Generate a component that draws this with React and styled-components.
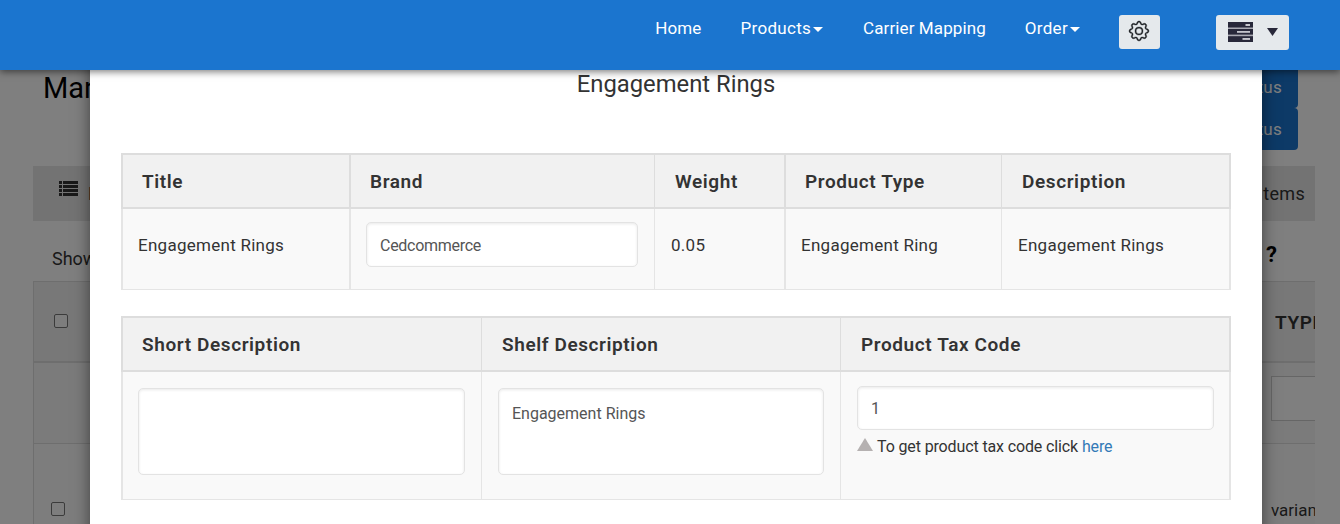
import React from "react";
import styled, { createGlobalStyle } from "styled-components";
import { BsGear } from "react-icons/bs";

const GlobalStyle = createGlobalStyle`
  *, *::before, *::after { box-sizing: border-box; }
  body {
    margin: 0;
    overflow: hidden;
    background: #fff;
    color: #333;
    font: 16px/1.43 Roboto, "Liberation Sans", sans-serif;
  }
`;

const Screen = styled.div`
  position: relative;
  height: 524px;
  overflow: hidden;
`;

/* Navigation bar */
const NavBar = styled.nav`
  position: relative;
  z-index: 3;
  display: flex;
  justify-content: flex-end;
  align-items: flex-start;
  height: 70px;
  padding: 15px 51px 0 0;
  background: #1b75cf;
  box-shadow: 0 2px 7px rgba(0, 0, 0, 0.5);
`;

const NavLink = styled.a`
  display: flex;
  align-items: center;
  height: 26px;
  margin-right: ${(p) => p.$gap}px;
  color: #fff;
  font-size: 17px;
  letter-spacing: ${(p) => p.$tracking || 0.3}px;
  white-space: nowrap;
`;

const Caret = styled.span`
  margin: 2px 0 0 2px;
  border-top: 5px solid #fff;
  border-left: 5px solid transparent;
  border-right: 5px solid transparent;
`;

const NavButton = styled.button`
  display: flex;
  align-items: center;
  justify-content: center;
  gap: 14px;
  width: ${(p) => p.$width}px;
  height: ${(p) => p.$height}px;
  margin: 0 ${(p) => p.$gap || 0}px 0 0;
  padding: 0 ${(p) => p.$end || 0}px 2px 0;
  border: 0;
  border-radius: 3px;
  background: #e5e9ec;
  color: #1f2226;
`;

const GearIcon = styled(BsGear)`
  width: 20px;
  height: 20px;
  stroke: currentColor;
  stroke-width: 0.25;
  overflow: visible;
`;

/* Page behind the dialog */
const Page = styled.main`
  display: flex;
  flex-direction: column;
  height: 454px;
  padding: 0 25px 0 33px;
  overflow: hidden;

  > * {
    flex-shrink: 0;
  }
`;

const PageHead = styled.header`
  display: flex;
  justify-content: space-between;
  height: 96px;
  padding: 0 17px 0 10px;
`;

const PageTitle = styled.h1`
  margin: 0;
  color: #000;
  font-size: 29px;
  font-weight: 400;
  line-height: 36px;
`;

const ActionStack = styled.div`
  display: flex;
  flex-direction: column;
  align-items: flex-end;
  margin-top: -4px;
`;

const ActionButton = styled.button`
  height: 42px;
  padding: 0 16px;
  border: 0;
  border-radius: 4px;
  background: #1b75cf;
  color: #fff;
  font: 17px Roboto, sans-serif;
  letter-spacing: 0.3px;
`;

const SummaryBar = styled.div`
  display: flex;
  justify-content: space-between;
  height: 55px;
  padding: 15px 10px 0 26px;
  background: #e7e7e7;
  font-size: 18px;
  line-height: 25px;
  letter-spacing: 0.3px;
`;

const SummaryLabel = styled.span`
  display: flex;
  gap: 10px;
`;

const ListRow = styled.div`
  display: flex;
  justify-content: space-between;
  height: 60px;
  padding: 24px 38px 0 19px;
  font-size: 18px;
  line-height: 28px;
`;

const Help = styled.strong`
  color: #000;
  font-size: 22px;
  line-height: 20px;
`;

const ProductGrid = styled.div`
  border: solid #ddd;
  border-width: 1px 0 0 1px;
  overflow: hidden;
`;

const ProductRow = styled.div`
  display: flex;
  justify-content: space-between;
  height: ${(p) => p.$height}px;
  padding: ${(p) => p.$pad};
  background: ${(p) => p.$bg};
  border-bottom: ${(p) => p.$line || 1}px solid #ddd;
  white-space: nowrap;
`;

const CheckBox = styled.span`
  width: 14px;
  height: 14px;
  border: 1px solid #777;
  border-radius: 2px;
  background: #fafafa;
`;

const TypeCell = styled.div`
  width: ${(p) => p.$width}px;
  margin-top: ${(p) => p.$shift || 0}px;
  overflow: hidden;
  font-size: ${(p) => p.$size || 17}px;
  font-weight: ${(p) => p.$weight || 400};
  line-height: 24px;
  letter-spacing: ${(p) => p.$tracking || 0}px;
`;

const FilterInput = styled.div`
  width: 80px;
  height: 45px;
  border: 1px solid #ccc;
  background: #fff;
`;

const Backdrop = styled.div`
  position: absolute;
  inset: 0;
  z-index: 1;
  background: rgba(0, 0, 0, 0.5);
`;

/* Product dialog */
const Dialog = styled.section`
  position: absolute;
  top: 30px;
  bottom: -40px;
  left: 90px;
  z-index: 2;
  width: 1172px;
  padding: 35px 31px 0;
  background: #fff;
  box-shadow: 0 5px 15px rgba(0, 0, 0, 0.5);
`;

const DialogTitle = styled.h4`
  height: 88px;
  margin: 0;
  font-size: 23.8px;
  font-weight: 400;
  line-height: 38px;
  text-align: center;
`;

const Table = styled.div`
  display: grid;
  grid-template-columns: ${(p) => p.$columns};
  grid-template-rows: 56px ${(p) => p.$body}px;
  margin-bottom: 26px;
`;

const HeadCell = styled.div`
  padding: 0 0 0 ${(p) => p.$left || 20}px;
  border: solid #ddd;
  border-width: 2px ${(p) => p.$right}px 2px ${(p) => (p.$first ? 2 : 0)}px;
  background: #f1f1f1;
  font-size: 19px;
  font-weight: 600;
  line-height: 54px;
  letter-spacing: 0.6px;
`;

const BodyCell = styled.div`
  padding: ${(p) => p.$top}px ${(p) => p.$end || 16}px 0 ${(p) => (p.$first ? 15 : p.$left || 16)}px;
  border: solid #e5e5e5;
  border-width: 0 ${(p) => p.$right}px 1px ${(p) => (p.$first ? 2 : 0)}px;
  background: #f9f9f9;
  font-size: 17px;
  line-height: 24px;
  letter-spacing: 0.27px;
`;

const Field = styled.div`
  height: ${(p) => p.$height}px;
  padding: ${(p) => p.$pad}px 13px 0;
  border: 1px solid #e3e3e3;
  border-radius: 5px;
  background: #fff;
  box-shadow: inset 0 1px 3px rgba(0, 0, 0, 0.09);
  color: #555;
  font-size: 16px;
  line-height: 24px;
  letter-spacing: ${(p) => p.$tracking || 0}px;
`;

const Hint = styled.p`
  display: flex;
  align-items: baseline;
  gap: 4px;
  margin: 5px 0 0;
  font-size: 16px;
  letter-spacing: -0.13px;
`;

const Triangle = styled.span`
  position: relative;
  top: -1px;
  border: solid transparent;
  border-width: 0 8px 13px;
  border-bottom-color: #b5b1b1;
`;

const Link = styled.a`
  color: #337ab7;
`;

const ListIcon = () => (
  <svg width="19" height="15" viewBox="0 0 19 15" fill="#333">
    {[0, 4, 8, 12].map((y) => (
      <g key={y}>
        <rect x="0" y={y} width="3" height="3" />
        <rect x="4" y={y} width="15" height="3" />
      </g>
    ))}
  </svg>
);

const ServerIcon = () => (
  <svg width="25" height="20" viewBox="0 0 25 20">
    <rect width="25" height="20" fill="#a9a9b2" />
    <rect width="25" height="5.5" fill="#28283a" />
    <rect y="7" width="25" height="5.6" fill="#28283a" />
    <rect y="14.2" width="25" height="5.8" fill="#28283a" />
    <rect x="17.5" y="2" width="4.5" height="2" fill="#c5c5cc" />
    <rect x="9" y="9" width="13" height="1.8" fill="#c5c5cc" />
    <rect x="14.5" y="16" width="7.5" height="1.9" fill="#c5c5cc" />
  </svg>
);

const DownIcon = () => (
  <svg width="11" height="8" viewBox="0 0 11 8">
    <path d="M0 0H11L5.5 8Z" fill="#28283a" />
  </svg>
);

export default function App() {
  return (
    <Screen>
      <GlobalStyle />
      <NavBar>
        <NavLink $gap={39} $tracking={0.1}>Home</NavLink>
        <NavLink $gap={40}>Products<Caret /></NavLink>
        <NavLink $gap={39} $tracking={0.1}>Carrier Mapping</NavLink>
        <NavLink $gap={39}>Order<Caret /></NavLink>
        <NavButton $width={41} $height={34} $gap={56} $end={1}><GearIcon /></NavButton>
        <NavButton $width={73} $height={35}><ServerIcon /><DownIcon /></NavButton>
      </NavBar>
      <Page>
        <PageHead>
          <PageTitle>Manage Products</PageTitle>
          <ActionStack>
            <ActionButton>Update Status</ActionButton>
            <ActionButton>Sync Status</ActionButton>
          </ActionStack>
        </PageHead>
        <SummaryBar>
          <SummaryLabel><ListIcon />List</SummaryLabel>
          <SummaryLabel>Items</SummaryLabel>
        </SummaryBar>
        <ListRow>
          <span>Showing</span>
          <Help>?</Help>
        </ListRow>
        <ProductGrid>
          <ProductRow $height={81} $line={2} $bg="#f1f1f1" $pad="32px 0 0 20px">
            <CheckBox />
            <TypeCell $width={40} $shift={-3} $size={19} $weight={600} $tracking={0.6}>TYPE</TypeCell>
          </ProductRow>
          <ProductRow $height={81} $bg="#f6f6f6" $pad="13px 0 0 20px">
            <span />
            <TypeCell $width={44}><FilterInput /></TypeCell>
          </ProductRow>
          <ProductRow $height={100} $bg="#fbfbfb" $pad="58px 0 0 17px">
            <CheckBox />
            <TypeCell $width={44} $shift={-4}>variants</TypeCell>
          </ProductRow>
        </ProductGrid>
      </Page>
      <Backdrop />
      <Dialog>
        <DialogTitle>Engagement Rings</DialogTitle>
        <Table $columns="230px 304px 131px 216px 229px" $body={81}>
          <HeadCell $first $left={19} $right={2}>Title</HeadCell>
          <HeadCell $left={19} $right={1}>Brand</HeadCell>
          <HeadCell $left={20} $right={2}>Weight</HeadCell>
          <HeadCell $left={19} $right={1}>Product Type</HeadCell>
          <HeadCell $right={2}>Description</HeadCell>
          <BodyCell $first $right={2} $top={24}>Engagement Rings</BodyCell>
          <BodyCell $right={1} $top={13} $left={15}>
            <Field $height={45} $pad={11} $tracking={-0.28}>Cedcommerce</Field>
          </BodyCell>
          <BodyCell $right={2} $top={24}>0.05</BodyCell>
          <BodyCell $right={1} $top={24} $left={15}>Engagement Ring</BodyCell>
          <BodyCell $right={2} $top={24}>Engagement Rings</BodyCell>
        </Table>
        <Table $columns="361px 359px 390px" $body={128}>
          <HeadCell $first $left={19} $right={1}>Short Description</HeadCell>
          <HeadCell $right={1}>Shelf Description</HeadCell>
          <HeadCell $right={2}>Product Tax Code</HeadCell>
          <BodyCell $first $right={1} $top={16}><Field $height={87} $pad={13} /></BodyCell>
          <BodyCell $right={1} $top={16}><Field $height={87} $pad={13}>Engagement Rings</Field></BodyCell>
          <BodyCell $right={2} $top={14} $end={15}>
            <Field $height={44} $pad={10}>1</Field>
            <Hint><Triangle /><span>To get product tax code click <Link>here</Link></span></Hint>
          </BodyCell>
        </Table>
      </Dialog>
    </Screen>
  );
}
